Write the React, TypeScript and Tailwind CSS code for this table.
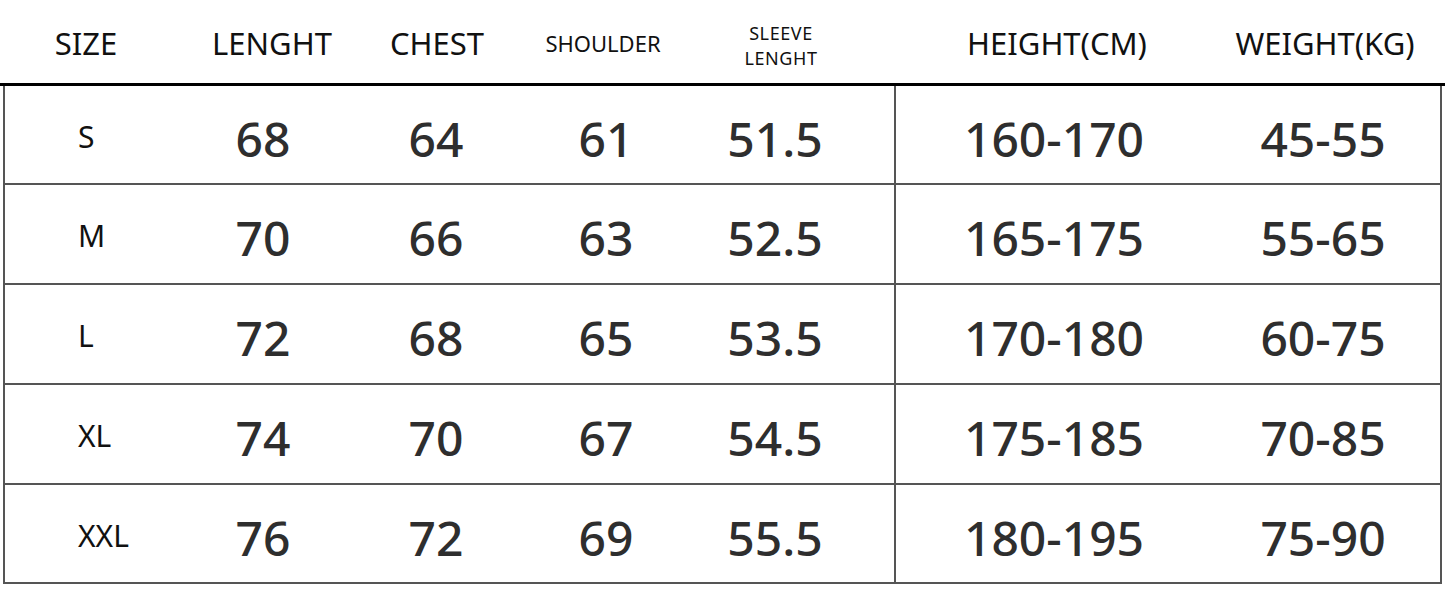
import React from "react";

const rows = [
  { size: "S", v: ["68", "64", "61", "51.5"], h: "160-170", w: "45-55" },
  { size: "M", v: ["70", "66", "63", "52.5"], h: "165-175", w: "55-65" },
  { size: "L", v: ["72", "68", "65", "53.5"], h: "170-180", w: "60-75" },
  { size: "XL", v: ["74", "70", "67", "54.5"], h: "175-185", w: "70-85" },
  { size: "XXL", v: ["76", "72", "69", "55.5"], h: "180-195", w: "75-90" },
];

const num = "flex items-center justify-center pt-[8px] text-[48px] leading-none font-medium text-[#2e2e2e]";

export default function App() {
  return (
    <div className="w-[1445px] h-[590px] bg-white font-['Noto_Sans',sans-serif] overflow-hidden">
      {/* header */}
      <div className="h-[83px] flex text-[#111] pt-[3px]">
        <div className="w-[172px] flex items-center justify-center text-[31px] leading-none">SIZE</div>
        <div className="w-[200px] flex items-center justify-center text-[31px] leading-none">LENGHT</div>
        <div className="w-[130px] flex items-center justify-center text-[31px] leading-none">CHEST</div>
        <div className="w-[202px] flex items-center justify-center text-[22px] leading-none">SHOULDER</div>
        <div className="w-[154px] flex flex-col items-center justify-center text-[18px] tracking-[0.6px] leading-[25px] mt-[6px]">
          <span>SLEEVE</span>
          <span>LENGHT</span>
        </div>
        <div className="w-[398px] flex items-center justify-center text-[31px] leading-none">HEIGHT(CM)</div>
        <div className="w-[138px] flex items-center justify-center text-[31px] leading-none">WEIGHT(KG)</div>
      </div>
      <div className="h-[3px] bg-black" />

      {/* body */}
      <div className="mx-[3px] border-x-2 border-[#555]">
        {rows.map((r, i) => (
          <div
            key={r.size}
            className={`flex border-b-2 border-[#555] ${i === 0 || i === rows.length - 1 ? "h-[99px]" : "h-[100px]"}`}
          >
            <div className="w-[175px] flex items-center pl-[73px] pt-[4px] text-[30px] leading-none text-[#111]">
              {r.size}
            </div>
            <div className={`w-[166px] ${num}`}>{r.v[0]}</div>
            <div className={`w-[180px] ${num}`}>{r.v[1]}</div>
            <div className={`w-[160px] ${num}`}>{r.v[2]}</div>
            <div className={`w-[208px] pr-[30px] ${num}`}>{r.v[3]}</div>
            <div className={`w-[318px] border-l-2 border-[#555] ${num}`}>{r.h}</div>
            <div className={`flex-1 pr-[6px] ${num}`}>{r.w}</div>
          </div>
        ))}
      </div>
    </div>
  );
}
